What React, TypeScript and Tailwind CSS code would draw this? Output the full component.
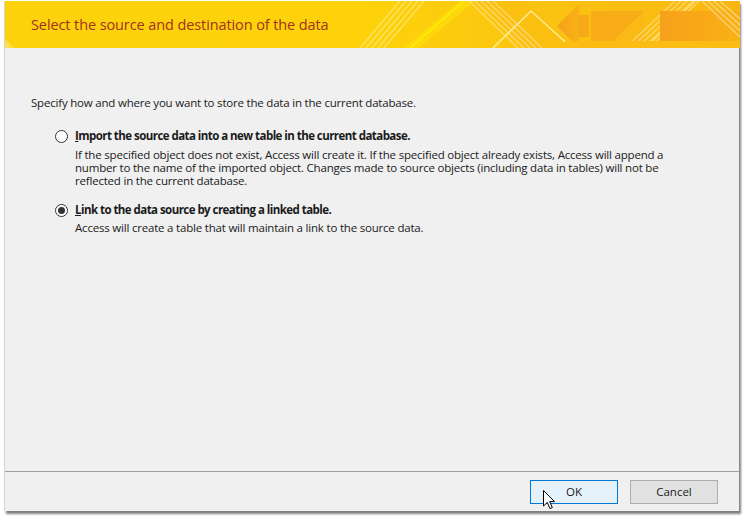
import React from "react";

const font = { fontFamily: '"Open Sans", "Noto Sans", sans-serif' };

function HeaderArt() {
  return (
    <svg className="absolute inset-0" width="735" height="47" viewBox="0 0 735 47" preserveAspectRatio="none">
      <defs>
        <linearGradient id="bg" x1="0" y1="0" x2="1" y2="0">
          <stop offset="0" stopColor="#fcd20c" />
          <stop offset="0.5" stopColor="#fdd20a" />
          <stop offset="0.72" stopColor="#fbc411" />
          <stop offset="1" stopColor="#f9b512" />
        </linearGradient>
        <linearGradient id="org" x1="0" y1="0" x2="1" y2="0">
          <stop offset="0" stopColor="#f6a01c" />
          <stop offset="1" stopColor="#f9b114" />
        </linearGradient>
      </defs>
      <rect x="0" y="0" width="735" height="47" fill="url(#bg)" />
      <polygon points="0,38 0,47 9,47" fill="#fde56a" opacity="0.7" />
      <g stroke="#ffffff" strokeOpacity="0.35" strokeWidth="1.5">
        <line x1="355" y1="47" x2="395" y2="0" />
        <line x1="361" y1="47" x2="401" y2="0" />
        <line x1="367" y1="47" x2="407" y2="0" />
        <line x1="373" y1="47" x2="413" y2="0" />
        <line x1="379" y1="47" x2="419" y2="0" />
      </g>
      <polygon points="398,47 455,0 470,0 413,47" fill="#fde10a" opacity="0.6" />
      <line x1="405" y1="47" x2="459" y2="0" stroke="#fff200" strokeOpacity="0.8" strokeWidth="1.5" />
      <polygon points="470,0 520,0 570,47 520,47" fill="#fbbd12" opacity="0.6" />
      <g stroke="#ffffff" strokeOpacity="0.35" strokeWidth="1.5">
        <line x1="464" y1="0" x2="513" y2="47" />
        <line x1="470" y1="0" x2="519" y2="47" />
        <line x1="476" y1="0" x2="525" y2="47" />
        <line x1="482" y1="0" x2="531" y2="47" />
        <line x1="488" y1="0" x2="537" y2="47" />
      </g>
      <polyline points="488,47 526,10 567,47" fill="none" stroke="#fff3a0" strokeOpacity="0.85" strokeWidth="1.6" />
      <polygon points="552,25 574,3 574,47" fill="url(#org)" />
      <rect x="574" y="14" width="10" height="22" fill="#f7a81b" />
      <rect x="586" y="10" width="52" height="30" fill="#f8ad18" />
      <polygon points="600,47 650,0 700,0 650,47" fill="#fbbe13" opacity="0.7" />
      <g stroke="#ffffff" strokeOpacity="0.35" strokeWidth="1.5">
        <line x1="620" y1="47" x2="670" y2="0" />
        <line x1="626" y1="47" x2="676" y2="0" />
        <line x1="632" y1="47" x2="682" y2="0" />
        <line x1="638" y1="47" x2="688" y2="0" />
        <line x1="644" y1="47" x2="694" y2="0" />
      </g>
      <line x1="640" y1="47" x2="690" y2="0" stroke="#fff3a0" strokeOpacity="0.7" strokeWidth="1.2" />
      <rect x="655" y="10" width="80" height="30" fill="url(#org)" />
      <g stroke="#ffffff" strokeOpacity="0.4" strokeWidth="1.5">
        <line x1="697" y1="0" x2="735" y2="36" />
        <line x1="703" y1="0" x2="735" y2="30" />
        <line x1="709" y1="0" x2="735" y2="24" />
        <line x1="715" y1="0" x2="735" y2="18" />
      </g>
      <rect x="560" y="40" width="175" height="7" fill="#fbbd14" />
    </svg>
  );
}

function Radio({ checked }: { checked?: boolean }) {
  return (
    <span className="w-[13px] h-[13px] rounded-full border border-[#333333] bg-white flex items-center justify-center shrink-0">
      {checked && <span className="w-[7px] h-[7px] rounded-full bg-[#333333]" />}
    </span>
  );
}

function Cursor() {
  return (
    <svg className="absolute left-[543px] top-[490px]" width="13" height="20" viewBox="0 0 13 20">
      <path d="M0.5,0.5 L0.5,16 L4.3,12.4 L7,18.6 L9.3,17.6 L6.7,11.6 L11.5,11.6 Z" fill="#ffffff" stroke="#000000" strokeWidth="1" strokeLinejoin="miter" />
    </svg>
  );
}

export default function App() {
  return (
    <div className="w-[744px] h-[521px] bg-white relative overflow-hidden text-[#1a1a1a]" style={font}>
      <div className="absolute left-[4px] top-[1px] w-[735px] h-[510px] bg-[#f0f0f0] border-l border-[#d4d4d4] shadow-[2px_3px_2px_rgba(0,0,0,0.5)] flex flex-col">
        <div className="relative h-[47px] shrink-0">
          <HeaderArt />
          <div className="relative pl-[26px] pt-[14px] text-[14.5px] tracking-[-0.1px] leading-[20px] text-[#a0321d]">
            Select the source and destination of the data
          </div>
        </div>
        <div className="flex-1 pl-[26px] text-[11.5px] tracking-[-0.2px]">
          <div className="mt-[47px] leading-[16px]">
            Specify how and where you want to store the data in the current database.
          </div>
          <div className="pl-[24px]">
            <div className="mt-[17px] flex items-center gap-[7px] leading-[16px]">
              <Radio />
              <span className="font-bold tracking-[-0.55px]">
                <span className="underline">I</span>mport the source data into a new table in the current database.
              </span>
            </div>
            <div className="ml-[20px] mt-[4px] leading-[13px] w-[598px]">
              If the specified object does not exist, Access will create it. If the specified object already exists, Access will append a number to the name of the imported object. Changes made to source objects (including data in tables) will not be reflected in the current database.
            </div>
            <div className="mt-[15px] flex items-center gap-[7px] leading-[16px]">
              <Radio checked />
              <span className="font-bold tracking-[-0.55px]">
                <span className="underline">L</span>ink to the data source by creating a linked table.
              </span>
            </div>
            <div className="ml-[20px] mt-[3px] leading-[13px]">
              Access will create a table that will maintain a link to the source data.
            </div>
          </div>
        </div>
        <div className="h-[40px] shrink-0 border-t border-[#a0a0a0] flex items-center justify-end gap-[12px] pr-[21px] text-[11.5px]">
          <button className="w-[88px] h-[24px] border border-[#0078d7] bg-[#e5f1fb] leading-[20px]">OK</button>
          <button className="w-[88px] h-[24px] border border-[#adadad] bg-[#e1e1e1] leading-[20px]">Cancel</button>
        </div>
      </div>
      <Cursor />
    </div>
  );
}
